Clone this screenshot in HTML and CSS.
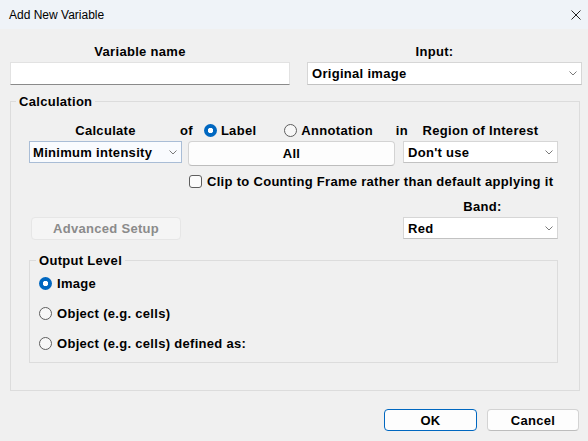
FILE: index.html
```html
<!DOCTYPE html>
<html lang="en">
<head>
    <meta charset="UTF-8">
    <title>Add New Variable</title>
    <link rel="stylesheet" href="styles.css">
</head>
<body>
    <div class="window">
        <div class="titlebar">
            <span>Add New Variable</span>
            <svg class="close" width="10" height="10" viewBox="0 0 10 10">
                <path d="M0.5 0.5 L9.5 9.5 M9.5 0.5 L0.5 9.5" stroke="#222" stroke-width="1"/>
            </svg>
        </div>

        <div class="top">
            <div class="field">
                <div class="field-label">Variable name</div>
                <div class="textbox"></div>
            </div>
            <div class="field">
                <div class="field-label">Input:</div>
                <div class="dropdown">
                    <span>Original image</span>
                    <svg class="chev" width="8" height="5" viewBox="0 0 8 5"><polyline points="0.5,0.5 4,4 7.5,0.5" fill="none" stroke="#7a7a7a"/></svg>
                </div>
            </div>
        </div>

        <fieldset class="group calc">
            <legend>Calculation</legend>
            <div class="calc-body">
                <div class="heads">
                    <div class="head-calc">Calculate</div>
                    <div class="head-mid">
                        <span class="of">of</span>
                        <span class="opt opt-label"><span class="radio on"></span>Label</span>
                        <span class="opt opt-annot"><span class="radio"></span>Annotation</span>
                        <span class="in">in</span>
                    </div>
                    <div class="head-roi">Region of Interest</div>
                </div>

                <div class="controls">
                    <div class="dropdown focus w-calc">
                        <span>Minimum intensity</span>
                        <svg class="chev" width="8" height="5" viewBox="0 0 8 5"><polyline points="0.5,0.5 4,4 7.5,0.5" fill="none" stroke="#7a7a7a"/></svg>
                    </div>
                    <div class="btn btn-all">All</div>
                    <div class="dropdown w-roi">
                        <span>Don't use</span>
                        <svg class="chev" width="8" height="5" viewBox="0 0 8 5"><polyline points="0.5,0.5 4,4 7.5,0.5" fill="none" stroke="#7a7a7a"/></svg>
                    </div>
                </div>

                <div class="clip">
                    <span class="check"></span>
                    <span class="clip-text">Clip to Counting Frame rather than default applying it</span>
                </div>

                <div class="lower">
                    <div class="btn disabled adv">Advanced Setup</div>
                    <div class="band-col">
                        <div class="band-label">Band:</div>
                        <div class="dropdown">
                            <span>Red</span>
                            <svg class="chev" width="8" height="5" viewBox="0 0 8 5"><polyline points="0.5,0.5 4,4 7.5,0.5" fill="none" stroke="#7a7a7a"/></svg>
                        </div>
                    </div>
                </div>

                <fieldset class="group output">
                    <legend>Output Level</legend>
                    <div class="out-list">
                        <div class="out-opt"><span class="radio on"></span>Image</div>
                        <div class="out-opt"><span class="radio"></span>Object (e.g. cells)</div>
                        <div class="out-opt"><span class="radio"></span>Object (e.g. cells) defined as:</div>
                    </div>
                </fieldset>
            </div>
        </fieldset>

        <div class="actions">
            <div class="btn default">OK</div>
            <div class="btn cancel">Cancel</div>
        </div>
    </div>
</body>
</html>
```

FILE: styles.css
```css
* {
    box-sizing: border-box;
}

body {
    margin: 0;
    background-color: #f0f0f0;
    font-family: "Liberation Sans", Arial, sans-serif;
    font-size: 13px;
    font-weight: bold;
    letter-spacing: 0.3px;
    color: #000;
}

.window {
    width: 588px;
    height: 441px;
}

.titlebar {
    height: 29px;
    background-color: #eff3f8;
    display: flex;
    align-items: center;
    justify-content: space-between;
    padding: 0 7px 0 9px;
    font-weight: normal;
    font-size: 12px;
    letter-spacing: 0;
}

/* top row: name + input */
.top {
    display: grid;
    grid-template-columns: 280px 275px;
    column-gap: 17px;
    padding: 15px 0 0 10px;
}

.field-label {
    height: 16px;
    line-height: 16px;
    text-align: center;
    padding-right: 20px;
    margin-bottom: 2px;
}

.textbox {
    height: 23px;
    background-color: #fff;
    border: 1px solid #e2e2e2;
    border-bottom-color: #8a8a8a;
}

.dropdown {
    height: 23px;
    background-color: #fff;
    border: 1px solid #d6d6d6;
    border-bottom-color: #c2c2c2;
    display: flex;
    align-items: center;
    justify-content: space-between;
    padding: 0 4px 0 4px;
}

.dropdown.focus {
    background-color: #f9fbfe;
    border-color: #a9bdd6;
}

.chev {
    flex: none;
}

/* group boxes */
.group {
    border: 1px solid #dcdcdc;
    min-width: 0;
}

.group legend {
    padding: 0 3px;
    line-height: 15px;
}

.calc {
    width: 570px;
    margin: 9px 0 0 10px;
    padding: 13px 0 27px 5px;
}

.calc-body {
    margin-left: 13px;
}

.heads {
    display: grid;
    grid-template-columns: 153px 221px 155px;
    height: 16px;
    align-items: center;
}

.head-calc,
.head-roi {
    text-align: center;
}

.head-mid {
    display: flex;
    align-items: center;
}

.of {
    margin-left: -2px;
}

.opt {
    display: flex;
    align-items: center;
    gap: 4px;
}

.opt-label {
    margin-left: 11px;
}

.opt-annot {
    margin-left: 28px;
}

.in {
    margin-left: auto;
    margin-right: -5px;
}

.radio {
    width: 13px;
    height: 13px;
    border-radius: 50%;
    border: 1px solid #5e5e5e;
    background-color: #f7f7f7;
    flex: none;
}

.radio.on {
    border: none;
    background: radial-gradient(circle, #fff 0 2.4px, #0067c0 3px);
}

.controls {
    display: flex;
    align-items: flex-start;
    margin-top: 3px;
}

.w-calc {
    width: 153px;
    height: 22px;
    padding-left: 3px;
}

.w-roi {
    width: 155px;
    height: 22px;
    margin-left: 8px;
}

.btn {
    display: flex;
    align-items: center;
    justify-content: center;
    background-color: #fdfdfd;
    border: 1px solid #d3d3d3;
    border-bottom-color: #bdbdbd;
    border-radius: 4px;
}

.btn-all {
    width: 207px;
    height: 25px;
    margin-left: 6px;
}

.clip {
    display: flex;
    align-items: center;
    gap: 5px;
    height: 16px;
    margin: 7px 0 0 160px;
}

.check {
    width: 13px;
    height: 13px;
    border: 1px solid #5e5e5e;
    border-radius: 3px;
    background-color: #fbfbfb;
    flex: none;
}

.clip-text {
    white-space: nowrap;
}

.lower {
    display: flex;
    justify-content: space-between;
    align-items: flex-end;
    width: 529px;
    margin-top: 10px;
}

.adv {
    width: 150px;
    height: 23px;
    margin-left: 2px;
}

.btn.disabled {
    background-color: #f5f5f5;
    border-color: #e6e6e6;
    color: #8b8b8b;
}

.band-col {
    width: 155px;
    padding-bottom: 1px;
}

.band-label {
    height: 16px;
    line-height: 16px;
    text-align: center;
    padding-left: 4px;
    margin-bottom: 2px;
}

.band-col .dropdown {
    height: 22px;
}

.output {
    width: 529px;
    margin: 13px 0 0 0;
    padding: 7px 0 11px 6px;
}

.out-list {
    display: flex;
    flex-direction: column;
    gap: 14px;
}

.out-opt {
    display: flex;
    align-items: center;
    gap: 5px;
    height: 16px;
    margin-left: 3px;
}

/* dialog buttons */
.actions {
    display: flex;
    justify-content: flex-end;
    gap: 10px;
    padding: 18px 9px 0 0;
}

.actions .btn {
    height: 22px;
}

.btn.default {
    width: 93px;
    border-color: #0067c0;
}

.btn.cancel {
    width: 92px;
}
```
